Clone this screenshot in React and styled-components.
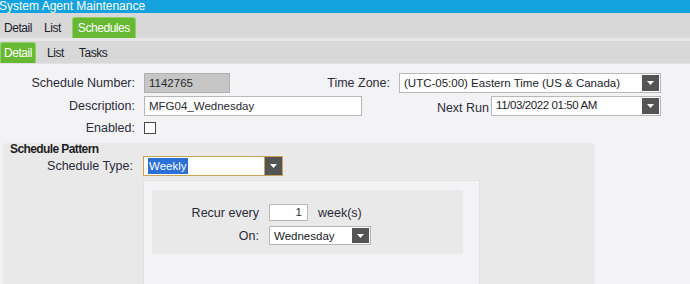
import React from "react";
import styled, { createGlobalStyle } from "styled-components";

const GlobalStyle = createGlobalStyle`
  html, body {
    margin: 0;
    padding: 0;
    background: #f3f3f5;
    font-family: "Liberation Sans", Arial, sans-serif;
    font-size: 12px;
    color: #2b2b35;
    overflow: hidden;
  }
`;

export default function App() {
  return (
    <>
      <GlobalStyle />
      <Page>
        <TitleBar>System Agent Maintenance</TitleBar>
        <TabBar $top>
          <Tab>Detail</Tab>
          <Tab>List</Tab>
          <Tab $active $pad={5}>Schedules</Tab>
        </TabBar>
        <TabBar>
          <Tab $active>Detail</Tab>
          <Tab>List</Tab>
          <Tab $wide>Tasks</Tab>
        </TabBar>

        <Form>
          <Row>
            <Field>
              <Label>Schedule Number:</Label>
              <TextBox $width={86} $readOnly>1142765</TextBox>
            </Field>
            <RightField>
              <RightLabel>Time Zone:</RightLabel>
              <Select $width={262}>
                <SelectText>(UTC-05:00) Eastern Time (US &amp; Canada)</SelectText>
                <Arrow />
              </Select>
            </RightField>
          </Row>
          <Row>
            <Field>
              <Label>Description:</Label>
              <TextBox $width={218}>MFG04_Wednesday</TextBox>
            </Field>
            <RightField>
              <RightLabel $tight $low>Next Run</RightLabel>
              <Select $width={170}>
                <SelectText $condensed $top>11/03/2022 01:50 AM</SelectText>
                <Arrow />
              </Select>
            </RightField>
          </Row>
          <Row $small>
            <Field>
              <Label>Enabled:</Label>
              <Checkbox />
            </Field>
          </Row>
        </Form>

        <Section>
          <SectionTitle>Schedule Pattern</SectionTitle>
          <TypeRow>
            <TypeLabel>Schedule Type:</TypeLabel>
            <Select $width={140} $focused>
              <SelectText><Highlight>Weekly</Highlight></SelectText>
              <Arrow $focused />
            </Select>
          </TypeRow>
          <PatternFrame>
            <PatternBox>
              <RecurRow>
                <RecurLabel>Recur every</RecurLabel>
                <NumberBox>1</NumberBox>
                <Unit>week(s)</Unit>
              </RecurRow>
              <RecurRow>
                <RecurLabel>On:</RecurLabel>
                <Select $width={102} $height={19}>
                  <SelectText>Wednesday</SelectText>
                  <Arrow />
                </Select>
              </RecurRow>
            </PatternBox>
          </PatternFrame>
        </Section>
      </Page>
    </>
  );
}

function Arrow({ $focused }) {
  return (
    <ArrowButton $focused={$focused}>
      <svg width="7" height="4" viewBox="0 0 7 4">
        <polygon points="0,0 7,0 3.5,4" fill="#ffffff" />
      </svg>
    </ArrowButton>
  );
}

const Page = styled.div`
  width: 690px;
  height: 284px;
  display: flex;
  flex-direction: column;
`;

const TitleBar = styled.div`
  height: 13px;
  line-height: 13px;
  background: #14a2df;
  color: #ffffff;
  font-size: 12px;
  margin-left: -1px;
  white-space: nowrap;
`;

const TabBar = styled.div`
  display: flex;
  align-items: flex-end;
  gap: 10px;
  background: #d8d8d8;
  height: ${p => (p.$top ? "24px" : "22px")};
  padding-left: ${p => (p.$top ? "3px" : "0")};
  padding-top: ${p => (p.$top ? "1px" : "0")};
  border-bottom: ${p => (p.$top ? "3px solid #e6e6e8" : "1px solid #e2e2e4")};
`;

const Tab = styled.div`
  height: 21px;
  line-height: 20px;
  padding: 0 ${p => (p.$active ? `${p.$pad || 3}px` : "0")};
  margin-left: ${p => (p.$wide ? "3px" : "0")};
  font-size: 12px;
  letter-spacing: -0.45px;
  color: ${p => (p.$active ? "#ffffff" : "#222228")};
  background: ${p => (p.$active ? "#67b832" : "transparent")};
  border: 1px solid ${p => (p.$active ? "#8fd06a" : "transparent")};
  border-bottom: none;
  border-radius: 3px 3px 0 0;
  box-sizing: border-box;
`;

const Form = styled.div`
  display: flex;
  flex-direction: column;
  gap: 3px;
  padding-top: 9px;
  padding-right: 29px;
`;

const Row = styled.div`
  display: flex;
  align-items: center;
  justify-content: space-between;
  height: ${p => (p.$small ? "18px" : "20px")};
`;

const Field = styled.div`
  display: flex;
  align-items: center;
  gap: 9px;
`;

const Label = styled.div`
  width: 135px;
  text-align: right;
  font-size: 12.5px;
  color: #2b2b3a;
`;

const RightField = styled.div`
  display: flex;
  align-items: center;
`;

const RightLabel = styled.div`
  font-size: 12.5px;
  color: #2b2b3a;
  margin-right: ${p => (p.$tight ? "2px" : "9px")};
  padding-top: ${p => (p.$low ? "4px" : "0")};
`;

const TextBox = styled.div`
  width: ${p => p.$width}px;
  height: 20px;
  box-sizing: border-box;
  border: 1px solid ${p => (p.$readOnly ? "#b0b0b0" : "#b8b8b8")};
  background: ${p => (p.$readOnly ? "#c6c6c6" : "#ffffff")};
  color: #2a2a30;
  font-size: 11.5px;
  line-height: 18px;
  padding-left: 4px;
`;

const Select = styled.div`
  width: ${p => p.$width}px;
  height: ${p => p.$height || 20}px;
  box-sizing: border-box;
  display: flex;
  align-items: stretch;
  border: 1px solid ${p => (p.$focused ? "#c9a35a" : "#b8b8b8")};
  background: #ffffff;
`;

const SelectText = styled.div`
  flex: 1;
  display: flex;
  align-items: ${p => (p.$top ? "flex-start" : "center")};
  padding-left: 4px;
  font-size: 11.5px;
  letter-spacing: ${p => (p.$condensed ? "-0.4px" : "0")};
  color: #22222a;
  white-space: nowrap;
  overflow: hidden;
  line-height: 16px;
`;

const Highlight = styled.span`
  background: #2a70d6;
  color: #ffffff;
  padding: 0 1px;
`;

const ArrowButton = styled.div`
  width: 17px;
  background: #545454;
  display: flex;
  align-items: center;
  justify-content: center;
  border: ${p => (p.$focused ? "1px solid #c9a35a" : "none")};
  margin: ${p => (p.$focused ? "-1px" : "1px")};
`;

const Checkbox = styled.div`
  width: 12px;
  height: 12px;
  box-sizing: border-box;
  border: 1px solid #4a4a4a;
  background: #ffffff;
`;

const Section = styled.div`
  margin: 6px 0 0 3px;
  width: 592px;
  flex: 1;
  background: #e9e9e9;
  border-radius: 4px 4px 0 0;
  display: flex;
  flex-direction: column;
`;

const SectionTitle = styled.div`
  font-weight: bold;
  font-size: 12px;
  letter-spacing: -0.6px;
  padding: 0 0 0 7px;
  height: 14px;
  line-height: 13px;
  color: #1e1e24;
`;

const TypeRow = styled.div`
  display: flex;
  align-items: center;
  height: 18px;
  gap: 10px;
`;

const TypeLabel = styled.div`
  width: 130px;
  text-align: right;
  font-size: 12.5px;
  color: #2b2b3a;
`;

const PatternFrame = styled.div`
  margin: 5px 0 0 140px;
  width: 337px;
  flex: 1;
  box-sizing: border-box;
  background: #f3f3f5;
  border: 1px solid #e2e2e4;
  border-bottom: none;
  padding: 9px 0 0 8px;
`;

const PatternBox = styled.div`
  width: 311px;
  height: 64px;
  background: #e9e9e9;
  border-radius: 3px;
  box-sizing: border-box;
  padding-top: 14px;
  display: flex;
  flex-direction: column;
  gap: 5px;
`;

const RecurRow = styled.div`
  display: flex;
  align-items: center;
`;

const RecurLabel = styled.div`
  width: 107px;
  text-align: right;
  margin-right: 10px;
  font-size: 12.5px;
  color: #2b2b3a;
`;

const NumberBox = styled.div`
  width: 39px;
  height: 17px;
  box-sizing: border-box;
  border: 1px solid #b8b8b8;
  background: #ffffff;
  text-align: right;
  padding-right: 5px;
  line-height: 15px;
  font-size: 11.5px;
`;

const Unit = styled.div`
  margin-left: 10px;
  font-size: 12.5px;
  color: #2b2b3a;
`;
